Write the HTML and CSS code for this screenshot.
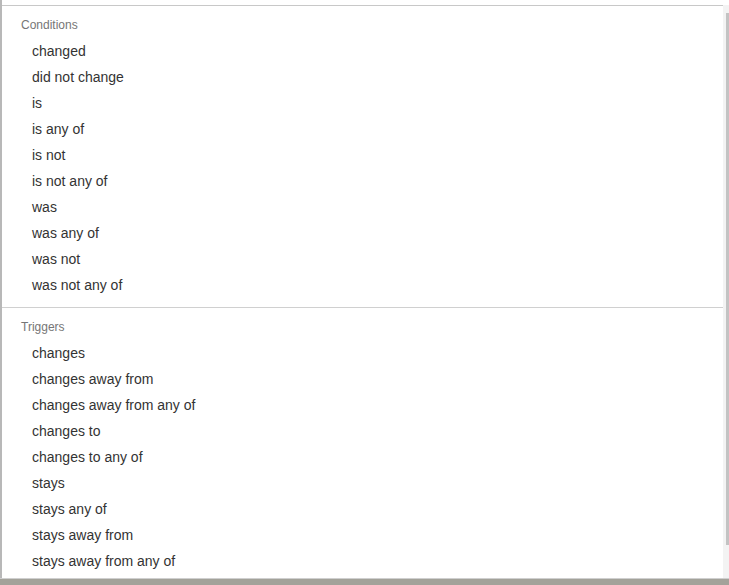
FILE: index.html
```html
<!DOCTYPE html>
<html>
<head>
<meta charset="utf-8">
<link rel="stylesheet" href="styles.css">
</head>
<body>
<div class="frame">
  <div class="panel">
    <div class="menu">
      <div class="group">
        <div class="group-title">Conditions</div>
        <div class="item">changed</div>
        <div class="item">did not change</div>
        <div class="item">is</div>
        <div class="item">is any of</div>
        <div class="item">is not</div>
        <div class="item">is not any of</div>
        <div class="item">was</div>
        <div class="item">was any of</div>
        <div class="item">was not</div>
        <div class="item">was not any of</div>
      </div>
      <div class="group group-second">
        <div class="group-title">Triggers</div>
        <div class="item">changes</div>
        <div class="item">changes away from</div>
        <div class="item">changes away from any of</div>
        <div class="item">changes to</div>
        <div class="item">changes to any of</div>
        <div class="item">stays</div>
        <div class="item">stays any of</div>
        <div class="item">stays away from</div>
        <div class="item">stays away from any of</div>
      </div>
    </div>
    <div class="scrollbar"><div class="thumb"></div></div>
  </div>
  <div class="bottom-band"></div>
</div>
</body>
</html>
```

FILE: styles.css
```css
html, body {
  margin: 0;
  padding: 0;
  background: #ffffff;
}
body {
  font-family: "Liberation Sans", Arial, sans-serif;
  width: 729px;
  height: 585px;
  overflow: hidden;
}
.frame {
  display: flex;
  flex-direction: column;
  height: 585px;
}
.panel {
  flex: 1;
  display: flex;
  padding-top: 5px;
  border-left: 2px solid #b8b8b8;
  box-sizing: border-box;
  min-height: 0;
}
.menu {
  flex: 1;
  border-top: 1px solid #c8c8c8;
  padding-top: 6px;
}
.group {
  padding-bottom: 9px;
}
.group-second {
  border-top: 1px solid #d0d0d0;
  padding-top: 6px;
}
.group-title {
  height: 26px;
  line-height: 26px;
  font-size: 12px;
  color: #767676;
  padding-left: 19px;
}
.item {
  height: 26px;
  line-height: 26px;
  font-size: 14px;
  color: #333333;
  padding-left: 30px;
}
.scrollbar {
  width: 6px;
  background: #f3f3f3;
  padding-top: 8px;
  display: flex;
  justify-content: flex-end;
  align-items: flex-start;
}
.thumb {
  width: 3px;
  height: 532px;
  background: #c3c3c3;
}
.bottom-band {
  height: 6px;
  background: #a3a29a;
  border-top: 1px solid #cfcfcf;
}
```
